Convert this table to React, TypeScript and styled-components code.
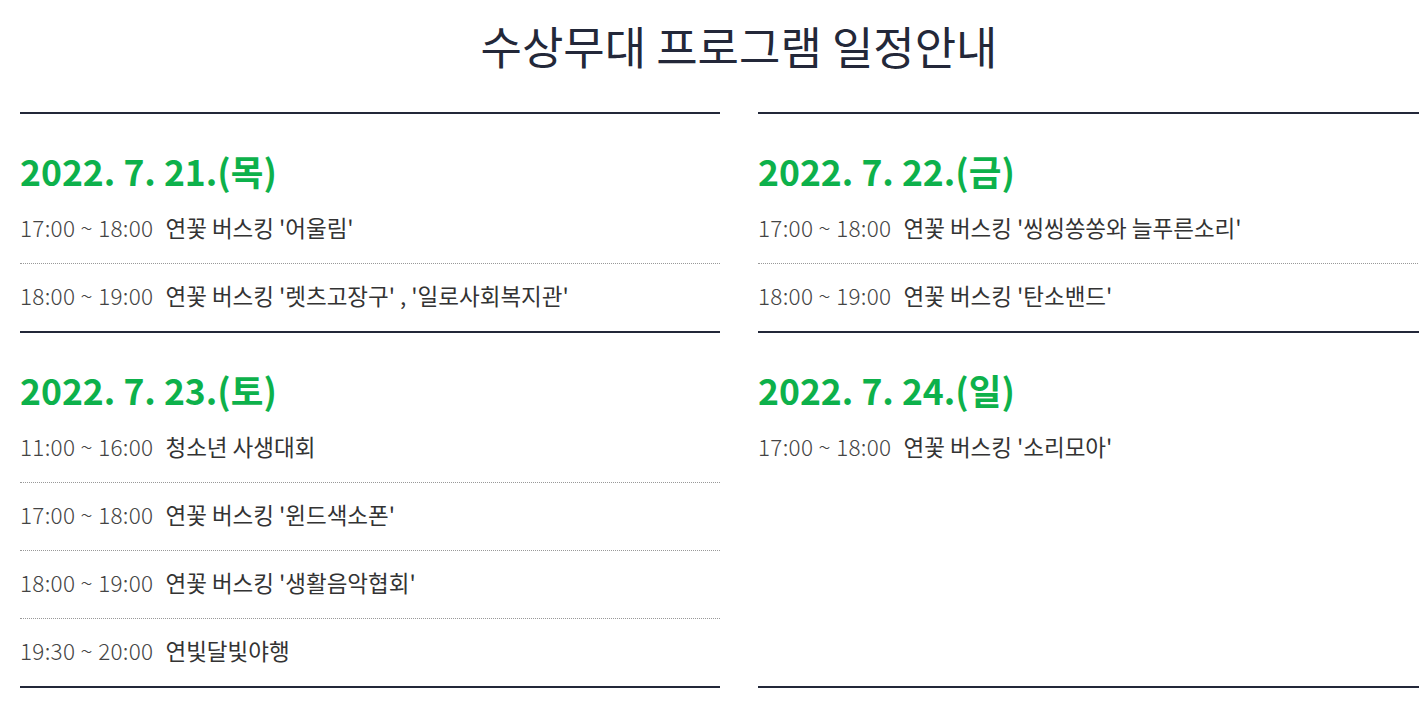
import React from "react";
import styled, { createGlobalStyle } from "styled-components";

const Global = createGlobalStyle`
  html, body { margin: 0; padding: 0; background: #fff; overflow: hidden; }
  body { font-family: "Noto Sans CJK KR", "Noto Sans", sans-serif; }
`;

const Page = styled.div`
  width: 1438px;
  padding: 0 0 0 20px;
`;

const Title = styled.h2`
  margin: 0;
  padding-top: 16px;
  height: 112px;
  box-sizing: border-box;
  text-align: center;
  font-size: 45px;
  line-height: 60px;
  font-weight: 400;
  color: #232839;
`;

const Grid = styled.div`
  display: grid;
  grid-template-columns: 700px 700px;
  column-gap: 38px;
`;

const Day = styled.section<{ $last?: boolean }>`
  border-top: 2px solid #232839;
  border-bottom: ${(p) => (p.$last ? "2px solid #232839" : "none")};
  padding-top: 37px;
`;

const DayTitle = styled.h3`
  margin: 0 0 5px;
  font-size: 35.5px;
  line-height: 40px;
  font-weight: 700;
  color: #0db14b;
`;

const List = styled.ul`
  list-style: none;
  margin: 0;
  padding: 0;
`;

const Item = styled.li`
  height: 68px;
  box-sizing: border-box;
  padding-bottom: 6px;
  display: flex;
  align-items: center;
  font-size: 22.5px;
  color: #333;
  border-bottom: 1px dotted #999;
  &:last-child { border-bottom: none; height: 67px; }
`;

const Time = styled.span`
  margin-right: 12px;
  color: #444;
  font-weight: 300;
  letter-spacing: 0.3px;
`;

const Desc = styled.span`
  color: #333;
`;

type Entry = [string, string];
const days: { title: string; items: Entry[] }[] = [
  {
    title: "2022. 7. 21.(목)",
    items: [
      ["17:00 ~ 18:00", "연꽃 버스킹 '어울림'"],
      ["18:00 ~ 19:00", "연꽃 버스킹 '렛츠고장구' , '일로사회복지관'"],
    ],
  },
  {
    title: "2022. 7. 22.(금)",
    items: [
      ["17:00 ~ 18:00", "연꽃 버스킹 '씽씽쏭쏭와 늘푸른소리'"],
      ["18:00 ~ 19:00", "연꽃 버스킹 '탄소밴드'"],
    ],
  },
  {
    title: "2022. 7. 23.(토)",
    items: [
      ["11:00 ~ 16:00", "청소년 사생대회"],
      ["17:00 ~ 18:00", "연꽃 버스킹 '윈드색소폰'"],
      ["18:00 ~ 19:00", "연꽃 버스킹 '생활음악협회'"],
      ["19:30 ~ 20:00", "연빛달빛야행"],
    ],
  },
  {
    title: "2022. 7. 24.(일)",
    items: [["17:00 ~ 18:00", "연꽃 버스킹 '소리모아'"]],
  },
];

export default function App() {
  return (
    <>
      <Global />
      <Page>
        <Title>수상무대 프로그램 일정안내</Title>
        <Grid>
          {days.map((d, i) => (
            <Day key={d.title} $last={i >= 2}>
              <DayTitle>{d.title}</DayTitle>
              <List>
                {d.items.map(([t, s]) => (
                  <Item key={t + s}>
                    <Time>{t}</Time>
                    <Desc>{s}</Desc>
                  </Item>
                ))}
              </List>
            </Day>
          ))}
        </Grid>
      </Page>
    </>
  );
}
